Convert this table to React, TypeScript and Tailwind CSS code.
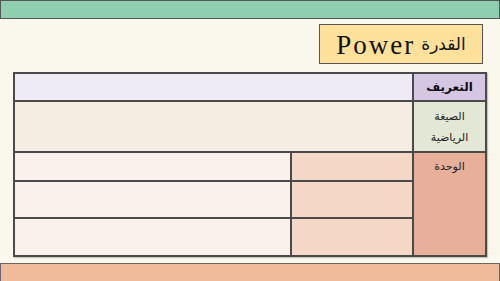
import React from "react";

const ar = { fontFamily: '"DejaVu Sans", "Noto Sans", sans-serif' };

export default function App() {
  return (
    <div className="w-[500px] h-[281px] bg-[#faf7ed] flex flex-col overflow-hidden">
      <div className="h-[19px] bg-[#8ecfb0] border border-[#555]" />
      <div className="flex justify-end pr-[17px] mt-[5px]">
        <div className="w-[164px] h-[40px] bg-[#fde09a] border border-[#555] flex items-center justify-center gap-[6px] pt-[2px]">
          <span
            className="text-[27px] tracking-[2px] text-[#111]"
            style={{ fontFamily: '"Liberation Serif", serif' }}
          >
            Power
          </span>
          <span className="text-[17px] text-[#111]" style={ar} dir="rtl">
            القدرة
          </span>
        </div>
      </div>
      <div className="ml-[13px] mt-[8px] w-[474px] h-[185px] bg-[#4a4a4a] border-2 border-[#4a4a4a] grid grid-cols-[275px_120px_71px] grid-rows-[26px_49px_27px_35px_36px] gap-[2px] shadow-[1px_1px_1px_rgba(0,0,0,0.2)]">
        <div className="col-span-2 bg-[#eeebf5]" />
        <div className="bg-[#d5c7e3] flex items-center justify-center text-[12px] font-bold text-[#111]" style={ar} dir="rtl">
          التعريف
        </div>
        <div className="col-span-2 bg-[#f5ede2]" />
        <div className="bg-[#e3e7d6] flex flex-col items-center justify-center text-[11px] leading-[21px] text-[#222]" style={ar} dir="rtl">
          <span>الصيغة</span>
          <span>الرياضية</span>
        </div>
        <div className="bg-[#faf1ec]" />
        <div className="bg-[#f4d7c6]" />
        <div className="row-span-3 bg-[#e8b09a] flex justify-center pt-[6px] text-[11px] text-[#222]" style={ar} dir="rtl">
          الوحدة
        </div>
        <div className="bg-[#faf1ec]" />
        <div className="bg-[#f4d7c6]" />
        <div className="bg-[#faf1ec]" />
        <div className="bg-[#f4d7c6]" />
      </div>
      <div className="mt-[6px] flex-1 bg-[#efbb9b] border-t border-l border-r border-[#666]" />
    </div>
  );
}
